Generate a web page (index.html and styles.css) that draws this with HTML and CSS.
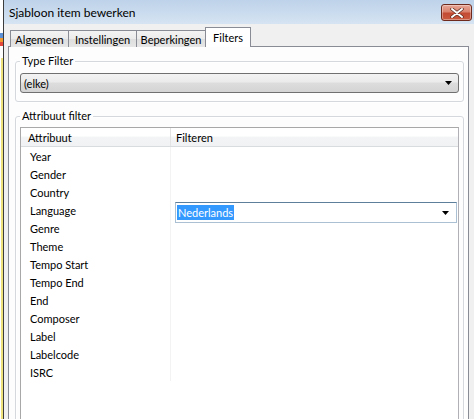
FILE: index.html
```html
<!DOCTYPE html>
<html>
<head>
<meta charset="utf-8">
<link rel="stylesheet" href="styles.css">
</head>
<body>
<div class="screen">
  <div class="bgstrip"></div>
  <div class="window">
    <div class="titlebar">
      <span class="title">Sjabloon item bewerken</span>
      <div class="close">
        <svg width="14" height="10" viewBox="0 0 14 10">
          <path d="M2 1 L12 9 M12 1 L2 9" stroke="#5a2a20" stroke-width="3.4" stroke-linecap="round"/>
          <path d="M2 1 L12 9 M12 1 L2 9" stroke="#ffffff" stroke-width="2" stroke-linecap="round"/>
        </svg>
      </div>
    </div>
    <div class="client">
      <div class="tabs">
        <div class="tab t1">Algemeen</div>
        <div class="tab t2">Instellingen</div>
        <div class="tab t3">Beperkingen</div>
        <div class="tab t4 selected">Filters</div>
      </div>
      <div class="panel">
        <div class="group">
          <span class="legend">Type Filter</span>
          <div class="combo">
            <span class="combo-text">(elke)</span>
            <svg class="arrow" width="7" height="4" viewBox="0 0 7 4"><path d="M0 0 H7 L3.5 4 Z" fill="#000"/></svg>
          </div>
        </div>
        <div class="group group2">
          <span class="legend">Attribuut filter</span>
          <div class="list">
            <div class="list-header">
              <div class="col1 hcell">Attribuut</div>
              <div class="col2 hcell">Filteren</div>
            </div>
            <div class="list-body">
              <div class="row"><div class="col1 cell">Year</div><div class="col2 cell"></div></div>
              <div class="row"><div class="col1 cell">Gender</div><div class="col2 cell"></div></div>
              <div class="row"><div class="col1 cell">Country</div><div class="col2 cell"></div></div>
              <div class="row"><div class="col1 cell">Language</div><div class="col2 cell">
                <div class="editor"><span class="sel">Nederlands</span>
                  <svg class="arrow" width="7" height="4" viewBox="0 0 7 4"><path d="M0 0 H7 L3.5 4 Z" fill="#000"/></svg>
                </div>
              </div></div>
              <div class="row"><div class="col1 cell">Genre</div><div class="col2 cell"></div></div>
              <div class="row"><div class="col1 cell">Theme</div><div class="col2 cell"></div></div>
              <div class="row"><div class="col1 cell">Tempo Start</div><div class="col2 cell"></div></div>
              <div class="row"><div class="col1 cell">Tempo End</div><div class="col2 cell"></div></div>
              <div class="row"><div class="col1 cell">End</div><div class="col2 cell"></div></div>
              <div class="row"><div class="col1 cell">Composer</div><div class="col2 cell"></div></div>
              <div class="row"><div class="col1 cell">Label</div><div class="col2 cell"></div></div>
              <div class="row"><div class="col1 cell">Labelcode</div><div class="col2 cell"></div></div>
              <div class="row"><div class="col1 cell">ISRC</div><div class="col2 cell"></div></div>
            </div>
          </div>
        </div>
      </div>
    </div>
  </div>
</div>
</body>
</html>
```
FILE: styles.css
```css
html, body {
  margin: 0;
  padding: 0;
}
body {
  font-family: "Lato", "Liberation Sans", sans-serif;
  font-size: 11px;
  color: #000;
  background: #f0f0f0;
}
.screen {
  width: 474px;
  height: 419px;
  overflow: hidden;
  display: flex;
}
.bgstrip {
  width: 3px;
  flex: none;
  background:
    linear-gradient(to bottom, #ffffff 0, #ffffff 33px, #5b8fd6 33px, #5b8fd6 38px, #f29a2e 38px, #f29a2e 42px, #e4473c 42px, #e4473c 46px, #ffffff 46px, #ffffff 58px, transparent 58px),
    linear-gradient(to right, #ffffff 0, #ffffff 1px, #efe27a 1px, #efe27a 3px);
}
.window {
  flex: 1;
  border-left: 1px solid #3c3c3c;
  display: flex;
  flex-direction: column;
  min-width: 0;
}
.titlebar {
  height: 24px;
  flex: none;
  background: linear-gradient(to bottom, #bed2e9 0, #c9dbee 50%, #d6e4f2 100%);
  display: flex;
  align-items: center;
  padding-left: 5px;
  position: relative;
}
.title {
  font-size: 12px;
  color: #000;
  margin-top: 1px;
}
.close {
  position: absolute;
  left: 437px;
  top: 4px;
  width: 29px;
  height: 15px;
  border: 1px solid #6f2a1e;
  border-radius: 3px;
  background: linear-gradient(to bottom, #e9a797 0, #d9826d 45%, #c34a33 55%, #c95a40 100%);
  display: flex;
  align-items: center;
  justify-content: center;
  box-shadow: inset 0 0 0 1px rgba(255,255,255,0.35);
}
.client {
  flex: 1;
  background: #f0f0f0;
  padding: 3px 0 0 4px;
  display: flex;
  flex-direction: column;
}
.tabs {
  display: flex;
  align-items: flex-end;
  height: 20px;
  margin-left: 2px;
  margin-bottom: -1px;
  position: relative;
  z-index: 1;
}
.tab {
  height: 17px;
  border: 1px solid #898c95;
  border-bottom: none;
  background: linear-gradient(to bottom, #f3f3f3 0, #ebebeb 50%, #dedede 51%, #e6e6e6 100%);
  display: flex;
  align-items: center;
  justify-content: center;
  box-sizing: border-box;
  margin-left: -1px;
  font-size: 11px;
  padding-top: 1px;
}
.t1 { width: 59px; margin-left: 0; }
.t2 { width: 69px; }
.t3 { width: 70px; }
.t4 { width: 46px; }
.tab.selected {
  height: 20px;
  background: #ffffff;
  border-bottom: none;
  padding-bottom: 2px;
}
.panel {
  width: 461px;
  box-sizing: border-box;
  flex: 1;
  border: 1px solid #898c95;
  background: #fdfdfd;
  padding: 14px 4px 0 6px;
}
.group {
  border: 1px solid #d5d9dd;
  border-radius: 3px;
  box-shadow: inset 1px 1px 0 #ffffff, 1px 1px 0 #ffffff;
  padding: 0 4px 8px 4px;
  display: flex;
  flex-direction: column;
  align-items: flex-start;
}
.legend {
  display: block;
  margin-top: -8px;
  line-height: 14px;
  padding: 0 2px;
  background: #fdfdfd;
  font-size: 11px;
}
.combo {
  align-self: stretch;
  margin-top: 5px;
  height: 20px;
  box-sizing: border-box;
  border: 1px solid #707070;
  border-radius: 3px;
  background: linear-gradient(to bottom, #f3f3f3 0, #ebebeb 45%, #dddddd 50%, #d4d4d4 100%);
  display: flex;
  align-items: center;
  padding: 0 6px 0 3px;
  font-size: 11px;
}
.combo-text { flex: 1; }
.arrow { flex: none; }
.group2 {
  margin-top: 14px;
  height: 400px;
}
.list {
  align-self: stretch;
  margin-top: 4px;
  flex: 1;
  border: 1px solid #a8a8a8;
  border-right-color: #b0b0b6;
  background: #ffffff;
}
.list-header {
  display: flex;
  height: 18px;
  border-bottom: 1px solid #d9dcdf;
  background: linear-gradient(to bottom, #ffffff 0, #ffffff 45%, #f3f4f5 50%, #f1f2f3 100%);
}
.col1 {
  width: 150px;
  flex: none;
  box-sizing: border-box;
  border-right: 1px solid #e3e3e3;
}
.col2 {
  flex: 1;
}
.hcell {
  display: flex;
  align-items: center;
  font-size: 11px;
}
.list-header .col1 { padding-left: 7px; }
.list-header .col2 { padding-left: 5px; }
.row {
  display: flex;
  height: 18px;
}
.cell {
  display: flex;
  align-items: center;
  font-size: 11px;
}
.row .col1 {
  padding-left: 9px;
  border-right-color: #f3f3f3;
}
.row .col2 {
  align-items: flex-start;
  position: relative;
}
.editor {
  margin: 1px 0 0 4px;
  height: 21px;
  flex: 1;
  margin-right: 1px;
  box-sizing: border-box;
  border: 1px solid #abc0d3;
  border-top-color: #5e7f9c;
  background: #ffffff;
  display: flex;
  align-items: center;
  padding: 0 7px 0 1px;
  position: relative;
  z-index: 1;
}
.sel {
  flex: none;
  background: #3399ff;
  color: #ffffff;
  line-height: 15px;
  padding: 0 1px;
  margin-right: auto;
}
```
